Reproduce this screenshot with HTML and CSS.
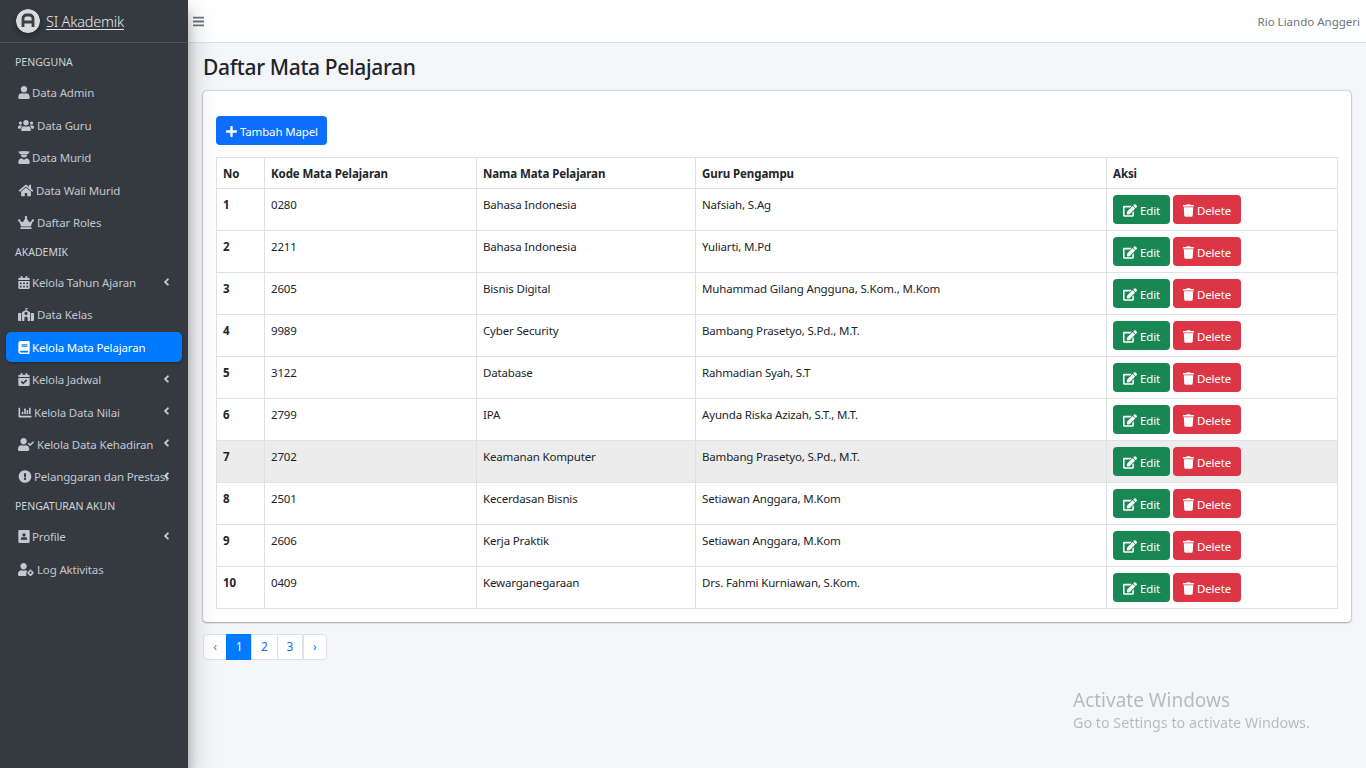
FILE: index.html
```html
<!DOCTYPE html>
<html lang="en">
<head>
<meta charset="UTF-8">
<meta name="viewport" content="width=device-width, initial-scale=1.0">
<title>Daftar Mata Pelajaran</title>
<link rel="stylesheet" href="styles.css">
</head>
<body>
    <svg class="sprite" xmlns="http://www.w3.org/2000/svg">
        <symbol id="i-user" viewBox="0 0 448 512"><path d="M224 256c70.700 0 128-57.300 128-128S294.700 0 224 0 96 57.300 96 128s57.300 128 128 128zm89.600 32h-16.700c-22.200 10.200-46.900 16-72.900 16s-50.600-5.800-72.900-16h-16.700C60.200 288 0 348.200 0 422.400V464c0 26.500 21.500 48 48 48h352c26.500 0 48-21.500 48-48v-41.600c0-74.200-60.200-134.400-134.400-134.400z"/></symbol>
        <symbol id="i-users" viewBox="0 0 640 512"><path d="M96 224c35.300 0 64-28.700 64-64s-28.700-64-64-64-64 28.700-64 64 28.700 64 64 64zm448 0c35.300 0 64-28.700 64-64s-28.700-64-64-64-64 28.700-64 64 28.700 64 64 64zm32 32h-64c-17.600 0-33.500 7.100-45.100 18.600 40.300 22.100 68.900 62 75.100 109.400h66c17.700 0 32-14.300 32-32v-32c0-35.300-28.700-64-64-64zm-256 0c61.900 0 112-50.100 112-112S381.900 32 320 32 208 82.100 208 144s50.100 112 112 112zm76.800 32h-8.300c-20.800 10-43.900 16-68.500 16s-47.600-6-68.500-16h-8.300C179.600 288 128 339.600 128 403.200V432c0 26.500 21.500 48 48 48h288c26.500 0 48-21.500 48-48v-28.800c0-63.600-51.600-115.200-115.200-115.200zm-223.700-13.400C161.500 263.100 145.600 256 128 256H64c-35.300 0-64 28.700-64 64v32c0 17.700 14.300 32 32 32h65.900c6.300-47.400 34.900-87.300 75.200-109.400z"/></symbol>
        <symbol id="i-grad" viewBox="0 0 448 512"><path d="M8 20 L224 0 L440 20 V70 H400 V120 H48 V70 H8 Z"/><path d="M96 140 H352 C352 215 295 256 224 256 C153 256 96 215 96 140 Z"/><path d="M48 512 C0 512 0 480 0 440 C0 350 50 290 120 282 L224 345 L328 282 C398 290 448 350 448 440 C448 480 448 512 400 512 Z"/></symbol>
        <symbol id="i-home" viewBox="0 0 576 512"><path d="M280.370 148.260L96 300.110V464a16 16 0 0 0 16 16l112.060-.29a16 16 0 0 0 15.920-16V368a16 16 0 0 1 16-16h64a16 16 0 0 1 16 16v95.640a16 16 0 0 0 16 16.050L464 480a16 16 0 0 0 16-16V300L295.670 148.260a12.190 12.190 0 0 0-15.300 0zM571.600 251.470L488 182.560V44.050a12 12 0 0 0-12-12h-56a12 12 0 0 0-12 12v72.610L318.470 43a48 48 0 0 0-61 0L4.340 251.470a12 12 0 0 0-1.600 16.900l25.500 31A12 12 0 0 0 45.150 301l235.220-193.740a12.190 12.190 0 0 1 15.300 0L530.900 301a12 12 0 0 0 16.900-1.600l25.500-31a12 12 0 0 0-1.700-16.930z"/></symbol>
        <symbol id="i-crown" viewBox="0 0 640 512"><path d="M528 448H112c-8.800 0-16 7.200-16 16v32c0 8.800 7.200 16 16 16h416c8.800 0 16-7.200 16-16v-32c0-8.800-7.200-16-16-16zm64-320c-26.500 0-48 21.500-48 48 0 7.100 1.600 13.700 4.400 19.800L476 239.200c-15.400 9.200-35.300 4-44.200-11.600L350.300 85C361 76.200 368 63 368 48c0-26.500-21.500-48-48-48s-48 21.500-48 48c0 15 7 28.200 17.700 37l-81.500 142.600c-8.900 15.600-28.900 20.800-44.200 11.600l-72.300-43.400c2.700-6 4.400-12.700 4.400-19.800 0-26.500-21.500-48-48-48S0 149.500 0 176s21.500 48 48 48c2.600 0 5.200-.4 7.700-.8L128 416h384l72.300-192.800c2.500.4 5.100.8 7.700.8 26.500 0 48-21.500 48-48s-21.500-48-48-48z"/></symbol>
        <symbol id="i-calendar" viewBox="0 0 448 512"><path d="M0 464c0 26.500 21.500 48 48 48h352c26.500 0 48-21.500 48-48V192H0v272zm320-196c0-6.600 5.400-12 12-12h40c6.600 0 12 5.400 12 12v40c0 6.600-5.400 12-12 12h-40c-6.600 0-12-5.400-12-12v-40zm0 128c0-6.600 5.400-12 12-12h40c6.600 0 12 5.400 12 12v40c0 6.600-5.400 12-12 12h-40c-6.600 0-12-5.400-12-12v-40zM192 268c0-6.600 5.400-12 12-12h40c6.600 0 12 5.400 12 12v40c0 6.600-5.400 12-12 12h-40c-6.600 0-12-5.400-12-12v-40zm0 128c0-6.600 5.400-12 12-12h40c6.600 0 12 5.400 12 12v40c0 6.600-5.400 12-12 12h-40c-6.600 0-12-5.400-12-12v-40zM64 268c0-6.600 5.400-12 12-12h40c6.600 0 12 5.400 12 12v40c0 6.600-5.400 12-12 12H76c-6.600 0-12-5.400-12-12v-40zm0 128c0-6.600 5.400-12 12-12h40c6.600 0 12 5.400 12 12v40c0 6.600-5.400 12-12 12H76c-6.600 0-12-5.400-12-12v-40zM400 64h-48V16c0-8.800-7.200-16-16-16h-32c-8.800 0-16 7.200-16 16v48H160V16c0-8.800-7.200-16-16-16h-32c-8.800 0-16 7.200-16 16v48H48C21.500 64 0 85.500 0 112v48h448v-48c0-26.500-21.500-48-48-48z"/></symbol>
        <symbol id="i-school" viewBox="0 0 640 512"><path d="M0 224c0-18 14-32 32-32h96v320H32c-18 0-32-14-32-32zM640 224c0-18-14-32-32-32h-96v320h96c18 0 32-14 32-32z"/><path fill-rule="evenodd" d="M160 170 L304 74 V0 H384 V40 H336 V74 L480 170 V512 H384 V400 C384 365 355 336 320 336 C285 336 256 365 256 400 V512 H160 Z M320 150 A62 62 0 1 0 320.100 274 A62 62 0 1 0 320 150 Z"/></symbol>
        <symbol id="i-book" viewBox="0 0 448 512"><path fill-rule="evenodd" d="M96 0H416c18 0 32 14 32 32V400c0 10-6 18-14 22-6 22-6 42 0 64 8 4 14 10 14 14 0 7-5 12-12 12H96C43 512 0 469 0 416V96C0 43 43 0 96 0zM128 134v20c0 5 5 10 10 10h212c5 0 10-5 10-10v-20c0-5-5-10-10-10H138c-5 0-10 5-10 10zm0 64v20c0 5 5 10 10 10h212c5 0 10-5 10-10v-20c0-5-5-10-10-10H138c-5 0-10 5-10 10zM96 384c-18 0-32 14-32 32s14 32 32 32h285c-3-21-3-43 0-64z"/></symbol>
        <symbol id="i-calcheck" viewBox="0 0 448 512"><path d="M436 160H12c-6.600 0-12-5.400-12-12v-36c0-26.500 21.500-48 48-48h48V12c0-6.600 5.400-12 12-12h40c6.600 0 12 5.400 12 12v52h128V12c0-6.600 5.400-12 12-12h40c6.600 0 12 5.400 12 12v52h48c26.500 0 48 21.500 48 48v36c0 6.600-5.400 12-12 12zM12 192h424c6.600 0 12 5.400 12 12v260c0 26.500-21.500 48-48 48H48c-26.500 0-48-21.500-48-48V204c0-6.600 5.400-12 12-12zm333.300 95.900l-28.200-28.400c-4.700-4.700-12.300-4.700-17-.1L194.500 364.100l-45.800-46.100c-4.700-4.700-12.300-4.700-17-.1l-28.400 28.200c-4.700 4.700-4.700 12.300-.1 17l82.600 83.300c4.700 4.700 12.300 4.700 17 .1l142.100-141c4.700-4.700 4.700-12.300-.1-17z"/></symbol>
        <symbol id="i-chart" viewBox="0 0 512 512"><path d="M332.800 320h38.400c6.400 0 12.800-6.400 12.800-12.800V172.800c0-6.400-6.400-12.800-12.800-12.800h-38.400c-6.400 0-12.800 6.400-12.800 12.800v134.400c0 6.400 6.400 12.800 12.800 12.800zm96 0h38.400c6.400 0 12.800-6.400 12.800-12.800V76.800c0-6.400-6.400-12.800-12.800-12.800h-38.400c-6.400 0-12.800 6.400-12.800 12.800v230.400c0 6.400 6.400 12.800 12.800 12.800zm-288 0h38.400c6.400 0 12.800-6.400 12.800-12.800v-70.400c0-6.400-6.400-12.800-12.800-12.800h-38.400c-6.400 0-12.800 6.400-12.800 12.800v70.400c0 6.400 6.400 12.800 12.800 12.800zm96 0h38.400c6.400 0 12.800-6.400 12.800-12.800V108.800c0-6.400-6.400-12.800-12.800-12.800h-38.400c-6.400 0-12.800 6.400-12.800 12.800v198.400c0 6.400 6.400 12.800 12.800 12.800zM496 384H64V80c0-8.840-7.160-16-16-16H16C7.160 64 0 71.160 0 80v336c0 17.670 14.330 32 32 32h464c8.840 0 16-7.160 16-16v-32c0-8.840-7.160-16-16-16z"/></symbol>
        <symbol id="i-usercheck" viewBox="0 0 640 512"><path d="M224 256c70.700 0 128-57.300 128-128S294.700 0 224 0 96 57.300 96 128s57.300 128 128 128zm89.600 32h-16.700c-22.200 10.200-46.900 16-72.900 16s-50.600-5.800-72.900-16h-16.700C60.200 288 0 348.200 0 422.400V464c0 26.500 21.500 48 48 48h352c26.500 0 48-21.500 48-48v-41.600c0-74.200-60.200-134.400-134.400-134.400zm323-128.400l-27.800-28.100c-4.600-4.700-12.100-4.700-16.800-.1l-104.800 104-45.500-45.800c-4.600-4.700-12.100-4.700-16.800-.1l-28.100 27.900c-4.700 4.600-4.700 12.100-.1 16.800l81.700 82.300c4.600 4.700 12.100 4.700 16.800.1l141.300-140.200c4.600-4.700 4.700-12.200.1-16.800z"/></symbol>
        <symbol id="i-alert" viewBox="0 0 512 512"><path d="M504 256c0 136.997-111.043 248-248 248S8 392.997 8 256C8 119.083 119.043 8 256 8s248 111.083 248 248zm-248 50c-25.405 0-46 20.595-46 46s20.595 46 46 46 46-20.595 46-46-20.595-46-46-46zm-43.673-165.346l7.418 136c.347 6.364 5.609 11.346 11.982 11.346h48.546c6.373 0 11.635-4.982 11.982-11.346l7.418-136c.375-6.874-5.098-12.654-11.982-12.654h-63.383c-6.884 0-12.356 5.780-11.981 12.654z"/></symbol>
        <symbol id="i-idbadge" viewBox="0 0 448 512"><path fill-rule="evenodd" d="M48 0H400c26.500 0 48 21.500 48 48V464c0 26.500-21.500 48-48 48H48c-26.500 0-48-21.500-48-48V48C0 21.500 21.500 0 48 0zM224 130a64 64 0 1 0 .1 128 64 64 0 1 0-.1-128zM112 384h224c9 0 16-7 16-16v-16c0-35-29-64-64-64H160c-35 0-64 29-64 64v16c0 9 7 16 16 16z"/></symbol>
        <symbol id="i-usercog" viewBox="0 0 640 512"><path d="M224 256c70.700 0 128-57.300 128-128S294.700 0 224 0 96 57.300 96 128s57.300 128 128 128zm89.600 32h-16.700c-22.200 10.200-46.900 16-72.900 16s-50.600-5.800-72.900-16h-16.700C60.200 288 0 348.200 0 422.400V464c0 26.500 21.500 48 48 48h288c-9-20-9-60 0-90 -10-30 5-70 30-90-15-15-30-44-52.400-44z"/><circle cx="500" cy="384" r="74" fill="none" stroke="currentColor" stroke-width="58"/><path d="M470 256h60l8 50h-76zM470 512h60l8-50h-76zM372 354v60l50-8v-44zM628 354v60l-50-8v-44z"/></symbol>
        <symbol id="i-plus" viewBox="0 0 448 512"><path d="M416 208H272V64c0-17.670-14.330-32-32-32h-32c-17.670 0-32 14.330-32 32v144H32c-17.670 0-32 14.330-32 32v32c0 17.670 14.330 32 32 32h144v144c0 17.670 14.330 32 32 32h32c17.670 0 32-14.330 32-32V304h144c17.670 0 32-14.330 32-32v-32c0-17.670-14.330-32-32-32z"/></symbol>
        <symbol id="i-edit" viewBox="0 0 576 512"><path d="M402.600 83.200l90.200 90.200c3.800 3.800 3.800 10 0 13.800L274.400 405.600l-92.800 10.300c-12.400 1.400-22.900-9.100-21.500-21.500l10.300-92.800L388.800 83.200c3.800-3.800 10-3.800 13.800 0zm162-22.900l-48.800-48.800c-15.200-15.200-39.900-15.200-55.200 0l-35.400 35.400c-3.800 3.800-3.800 10 0 13.800l90.200 90.200c3.800 3.800 10 3.800 13.800 0l35.400-35.400c15.200-15.300 15.200-40 0-55.200zM384 346.200V448H64V128h229.800c3.200 0 6.200-1.300 8.500-3.500l40-40c7.600-7.600 2.200-20.500-8.500-20.500H48C21.500 64 0 85.500 0 112v352c0 26.500 21.500 48 48 48h352c26.500 0 48-21.500 48-48V306.200c0-10.700-12.900-16-20.500-8.500l-40 40c-2.200 2.300-3.500 5.300-3.500 8.500z"/></symbol>
        <symbol id="i-trash" viewBox="0 0 448 512"><path d="M432 32H312l-9.400-18.700A24 24 0 0 0 281.100 0H166.800a23.720 23.720 0 0 0-21.400 13.300L136 32H16A16 16 0 0 0 0 48v32a16 16 0 0 0 16 16h416a16 16 0 0 0 16-16V48a16 16 0 0 0-16-16zM53.200 467a48 48 0 0 0 47.900 45h245.800a48 48 0 0 0 47.900-45L416 128H32z"/></symbol>
        <symbol id="i-bars" viewBox="0 0 448 512"><path d="M16 132h416c8.800 0 16-7.200 16-16V76c0-8.800-7.200-16-16-16H16C7.200 60 0 67.200 0 76v40c0 8.800 7.200 16 16 16zm0 160h416c8.800 0 16-7.200 16-16v-40c0-8.800-7.200-16-16-16H16c-8.800 0-16 7.200-16 16v40c0 8.800 7.200 16 16 16zm0 160h416c8.800 0 16-7.200 16-16v-40c0-8.800-7.200-16-16-16H16c-8.800 0-16 7.200-16 16v40c0 8.800 7.200 16 16 16z"/></symbol>
        <symbol id="i-angle" viewBox="0 0 256 512"><path d="M31.700 239l136-136c9.400-9.400 24.600-9.400 33.900 0l22.600 22.600c9.400 9.400 9.400 24.600 0 33.900L127.900 256l96.400 96.400c9.400 9.400 9.400 24.600 0 33.900L201.700 409c-9.400 9.400-24.600 9.400-33.900 0l-136-136c-9.500-9.400-9.500-24.600-.1-34z"/></symbol>
    </svg>

    <aside class="sidebar">
        <a class="brand" href="#">
            <svg class="brand-logo" viewBox="0 0 24 24"><circle cx="12" cy="12" r="12" fill="#d9dadb"/><path d="M7 18V9.500A3.500 3.500 0 0 1 10.500 6h3A3.500 3.500 0 0 1 17 9.500V18M7 13h10" fill="none" stroke="#3a3f45" stroke-width="2.800"/></svg>
            <span class="brand-text">SI Akademik</span>
        </a>
        <nav class="menu">
            <div class="menu-header">PENGGUNA</div>
            <a class="menu-item" href="#"><svg class="ic ic-s"><use href="#i-user"/></svg>Data Admin</a>
            <a class="menu-item" href="#"><svg class="ic ic-w"><use href="#i-users"/></svg>Data Guru</a>
            <a class="menu-item" href="#"><svg class="ic ic-s"><use href="#i-grad"/></svg>Data Murid</a>
            <a class="menu-item" href="#"><svg class="ic ic-m"><use href="#i-home"/></svg>Data Wali Murid</a>
            <a class="menu-item" href="#"><svg class="ic ic-w"><use href="#i-crown"/></svg>Daftar Roles</a>
            <div class="menu-header">AKADEMIK</div>
            <a class="menu-item has-sub" href="#"><svg class="ic ic-s"><use href="#i-calendar"/></svg>Kelola Tahun Ajaran<svg class="angle"><use href="#i-angle"/></svg></a>
            <a class="menu-item" href="#"><svg class="ic ic-w"><use href="#i-school"/></svg>Data Kelas</a>
            <a class="menu-item active" href="#"><svg class="ic ic-s"><use href="#i-book"/></svg>Kelola Mata Pelajaran</a>
            <a class="menu-item has-sub" href="#"><svg class="ic ic-s"><use href="#i-calcheck"/></svg>Kelola Jadwal<svg class="angle"><use href="#i-angle"/></svg></a>
            <a class="menu-item has-sub" href="#"><svg class="ic ic-c"><use href="#i-chart"/></svg>Kelola Data Nilai<svg class="angle"><use href="#i-angle"/></svg></a>
            <a class="menu-item has-sub" href="#"><svg class="ic ic-w"><use href="#i-usercheck"/></svg>Kelola Data Kehadiran<svg class="angle"><use href="#i-angle"/></svg></a>
            <a class="menu-item has-sub" href="#"><svg class="ic ic-c"><use href="#i-alert"/></svg>Pelanggaran dan Prestasi<svg class="angle"><use href="#i-angle"/></svg></a>
            <div class="menu-header">PENGATURAN AKUN</div>
            <a class="menu-item has-sub" href="#"><svg class="ic ic-s"><use href="#i-idbadge"/></svg>Profile<svg class="angle"><use href="#i-angle"/></svg></a>
            <a class="menu-item" href="#"><svg class="ic ic-w"><use href="#i-usercog"/></svg>Log Aktivitas</a>
        </nav>
    </aside>

    <div class="wrapper">
        <header class="topbar">
            <svg class="toggle"><use href="#i-bars"/></svg>
            <span class="user-name">Rio Liando Anggeri</span>
        </header>

        <main class="content">
            <h1 class="page-title">Daftar Mata Pelajaran</h1>

            <section class="card">
                <a class="btn btn-primary btn-add" href="#"><svg class="ic-btn"><use href="#i-plus"/></svg>Tambah Mapel</a>
                <table class="table">
                    <colgroup>
                        <col class="col-no"><col class="col-kode"><col class="col-nama"><col class="col-guru"><col>
                    </colgroup>
                    <thead>
                        <tr><th>No</th><th>Kode Mata Pelajaran</th><th>Nama Mata Pelajaran</th><th>Guru Pengampu</th><th>Aksi</th></tr>
                    </thead>
                    <tbody>
                        <tr><th>1</th><td>0280</td><td>Bahasa Indonesia</td><td>Nafsiah, S.Ag</td><td class="aksi"><a class="btn btn-success" href="#"><svg class="ic-btn"><use href="#i-edit"/></svg>Edit</a><a class="btn btn-danger" href="#"><svg class="ic-btn ic-trash"><use href="#i-trash"/></svg>Delete</a></td></tr>
                        <tr><th>2</th><td>2211</td><td>Bahasa Indonesia</td><td>Yuliarti, M.Pd</td><td class="aksi"><a class="btn btn-success" href="#"><svg class="ic-btn"><use href="#i-edit"/></svg>Edit</a><a class="btn btn-danger" href="#"><svg class="ic-btn ic-trash"><use href="#i-trash"/></svg>Delete</a></td></tr>
                        <tr><th>3</th><td>2605</td><td>Bisnis Digital</td><td>Muhammad Gilang Angguna, S.Kom., M.Kom</td><td class="aksi"><a class="btn btn-success" href="#"><svg class="ic-btn"><use href="#i-edit"/></svg>Edit</a><a class="btn btn-danger" href="#"><svg class="ic-btn ic-trash"><use href="#i-trash"/></svg>Delete</a></td></tr>
                        <tr><th>4</th><td>9989</td><td>Cyber Security</td><td>Bambang Prasetyo, S.Pd., M.T.</td><td class="aksi"><a class="btn btn-success" href="#"><svg class="ic-btn"><use href="#i-edit"/></svg>Edit</a><a class="btn btn-danger" href="#"><svg class="ic-btn ic-trash"><use href="#i-trash"/></svg>Delete</a></td></tr>
                        <tr><th>5</th><td>3122</td><td>Database</td><td>Rahmadian Syah, S.T</td><td class="aksi"><a class="btn btn-success" href="#"><svg class="ic-btn"><use href="#i-edit"/></svg>Edit</a><a class="btn btn-danger" href="#"><svg class="ic-btn ic-trash"><use href="#i-trash"/></svg>Delete</a></td></tr>
                        <tr><th>6</th><td>2799</td><td>IPA</td><td>Ayunda Riska Azizah, S.T., M.T.</td><td class="aksi"><a class="btn btn-success" href="#"><svg class="ic-btn"><use href="#i-edit"/></svg>Edit</a><a class="btn btn-danger" href="#"><svg class="ic-btn ic-trash"><use href="#i-trash"/></svg>Delete</a></td></tr>
                        <tr class="row-hover"><th>7</th><td>2702</td><td>Keamanan Komputer</td><td>Bambang Prasetyo, S.Pd., M.T.</td><td class="aksi"><a class="btn btn-success" href="#"><svg class="ic-btn"><use href="#i-edit"/></svg>Edit</a><a class="btn btn-danger" href="#"><svg class="ic-btn ic-trash"><use href="#i-trash"/></svg>Delete</a></td></tr>
                        <tr><th>8</th><td>2501</td><td>Kecerdasan Bisnis</td><td>Setiawan Anggara, M.Kom</td><td class="aksi"><a class="btn btn-success" href="#"><svg class="ic-btn"><use href="#i-edit"/></svg>Edit</a><a class="btn btn-danger" href="#"><svg class="ic-btn ic-trash"><use href="#i-trash"/></svg>Delete</a></td></tr>
                        <tr><th>9</th><td>2606</td><td>Kerja Praktik</td><td>Setiawan Anggara, M.Kom</td><td class="aksi"><a class="btn btn-success" href="#"><svg class="ic-btn"><use href="#i-edit"/></svg>Edit</a><a class="btn btn-danger" href="#"><svg class="ic-btn ic-trash"><use href="#i-trash"/></svg>Delete</a></td></tr>
                        <tr><th>10</th><td>0409</td><td>Kewarganegaraan</td><td>Drs. Fahmi Kurniawan, S.Kom.</td><td class="aksi"><a class="btn btn-success" href="#"><svg class="ic-btn"><use href="#i-edit"/></svg>Edit</a><a class="btn btn-danger" href="#"><svg class="ic-btn ic-trash"><use href="#i-trash"/></svg>Delete</a></td></tr>
                    </tbody>
                </table>
            </section>

            <ul class="pagination">
                <li class="page-nav">‹</li>
                <li class="page-num current">1</li>
                <li class="page-num">2</li>
                <li class="page-num">3</li>
                <li class="page-nav">›</li>
            </ul>
        </main>
    </div>

    <div class="watermark">
        <div class="wm-title">Activate Windows</div>
        <div class="wm-sub">Go to Settings to activate Windows.</div>
    </div>
</body>
</html>
```

FILE: styles.css
```css
* {
    box-sizing: border-box;
}
html, body {
    height: 100%;
}
body {
    margin: 0;
    display: flex;
    overflow: hidden;
    font-family: "Noto Sans", "Open Sans", Arial, sans-serif;
    font-size: 11.5px;
    letter-spacing: -.16px;
    color: #212529;
    background-color: #f4f6f9;
}
a {
    text-decoration: none;
}
.sprite {
    display: none;
}

/* sidebar */
.sidebar {
    width: 188px;
    flex: none;
    height: 768px;
    background-color: #343a40;
    box-shadow: 0 14px 28px rgba(0, 0, 0, .25), 0 10px 10px rgba(0, 0, 0, .22);
    position: relative;
    z-index: 2;
}
.brand {
    height: 43px;
    display: flex;
    align-items: center;
    gap: 6px;
    padding-left: 16px;
    border-bottom: 1px solid #4b545c;
    color: #e6e7e8;
}
.brand-logo {
    width: 24px;
    height: 24px;
    box-shadow: 0 3px 6px rgba(0, 0, 0, .3);
    border-radius: 50%;
}
.brand-text {
    font-size: 14.5px;
    font-weight: 300;
    letter-spacing: -.2px;
    text-decoration: underline;
    text-underline-offset: 2px;
}
.menu {
    padding: 7.4px 6px 0;
}
.menu-header {
    height: 27.6px;
    line-height: 25.6px;
    padding-left: 9px;
    font-size: 10.5px;
    letter-spacing: 0;
    color: #d0d4d8;
}
.menu-item {
    height: 30px;
    margin-bottom: 2.4px;
    padding-left: 12px;
    display: flex;
    align-items: center;
    position: relative;
    color: #c2c7d0;
    border-radius: 5px;
    white-space: nowrap;
}
.menu-item.active {
    background-color: #007bff;
    color: #fff;
    box-shadow: 0 1px 3px rgba(0, 0, 0, .3);
}
.ic {
    height: 13px;
    flex: none;
    fill: currentColor;
    color: #c2c7d0;
    margin-right: 2px;
}
.active .ic {
    color: #fff;
}
.ic-s {
    width: 12px;
}
.ic-c {
    width: 14px;
}
.ic-m {
    width: 16px;
}
.ic-w {
    width: 16px;
    margin-right: 3px;
}
.angle {
    position: absolute;
    left: 157px;
    top: 8px;
    width: 7px;
    height: 12px;
    fill: #c2c7d0;
}

/* topbar */
.wrapper {
    flex: 1;
    min-width: 0;
}
.topbar {
    height: 43px;
    background-color: #fff;
    border-bottom: 1px solid #dee2e6;
    display: flex;
    align-items: center;
    justify-content: space-between;
    padding: 0 6px 0 5px;
}
.toggle {
    width: 11px;
    height: 13px;
    fill: #6c757d;
}
.user-name {
    font-size: 11.5px;
    letter-spacing: 0;
    color: #6c757d;
}

/* content */
.content {
    padding: 0 15px;
}
.page-title {
    margin: 0;
    height: 48px;
    line-height: 48px;
    font-size: 21px;
    font-weight: 500;
    letter-spacing: -.35px;
    color: #212529;
}
.card {
    background-color: #fff;
    border-radius: 4px;
    box-shadow: 0 0 2px rgba(0, 0, 0, .4), 0 1px 2px rgba(0, 0, 0, .25);
    padding: 25px 13px 13px;
    height: 531px;
}
.btn {
    display: inline-flex;
    align-items: center;
    height: 29px;
    padding: 1px 10px 0;
    border-radius: 4px;
    color: #fff;
    font-size: 11.5px;
}
.btn-primary {
    background-color: #0d6efd;
}
.btn-success {
    background-color: #198754;
}
.btn-danger {
    background-color: #dc3545;
    margin-left: 3px;
}
.btn-add {
    margin-bottom: 12px;
    padding-right: 9px;
}
.ic-btn {
    width: 14px;
    height: 13px;
    fill: currentColor;
    margin-right: 3px;
}
.btn-add .ic-btn {
    width: 11px;
}
.ic-trash {
    width: 11px;
}
.table {
    width: 1122px;
    border-collapse: collapse;
    table-layout: fixed;
    font-size: 11.5px;
}
.col-no {
    width: 48px;
}
.col-kode {
    width: 212px;
}
.col-nama {
    width: 219px;
}
.col-guru {
    width: 411px;
}
.table th,
.table td {
    border: 1px solid #dee2e6;
    padding: 6px;
    text-align: left;
    vertical-align: top;
}
.table thead th {
    height: 31px;
    padding: 0 6px;
    vertical-align: middle;
    font-weight: 700;
    letter-spacing: -.08px;
}
.table tbody tr {
    height: 42px;
}
.table tbody th {
    font-weight: 700;
    padding-top: 8px;
}
.table tbody td {
    padding-top: 8px;
}
.table tbody td.aksi {
    padding: 6px;
    white-space: nowrap;
}
.row-hover {
    background-color: #ececec;
}

/* pagination */
.pagination {
    list-style: none;
    display: flex;
    margin: 12px 0 0;
    padding: 0;
    font-size: 12px;
}
.pagination li {
    height: 26px;
    line-height: 24px;
    text-align: center;
    background-color: #fff;
    border: 1px solid #dee2e6;
    margin-left: -1px;
    color: #0d6efd;
}
.pagination .page-nav {
    width: 24px;
    color: #6c757d;
    border-radius: 4px 0 0 4px;
    margin-left: 0;
}
.pagination .page-nav:last-child {
    color: #0d6efd;
    border-radius: 0 4px 4px 0;
}
.pagination .page-num {
    width: 26.3px;
}
.pagination .current {
    background-color: #007bff;
    border-color: #007bff;
    color: #fff;
}

/* watermark */
.watermark {
    position: fixed;
    left: 1073px;
    top: 688px;
    color: rgba(0, 0, 0, .25);
    letter-spacing: 0;
    pointer-events: none;
}
.wm-title {
    font-size: 19px;
    line-height: 25px;
}
.wm-sub {
    font-size: 14.3px;
    line-height: 20px;
}
```
